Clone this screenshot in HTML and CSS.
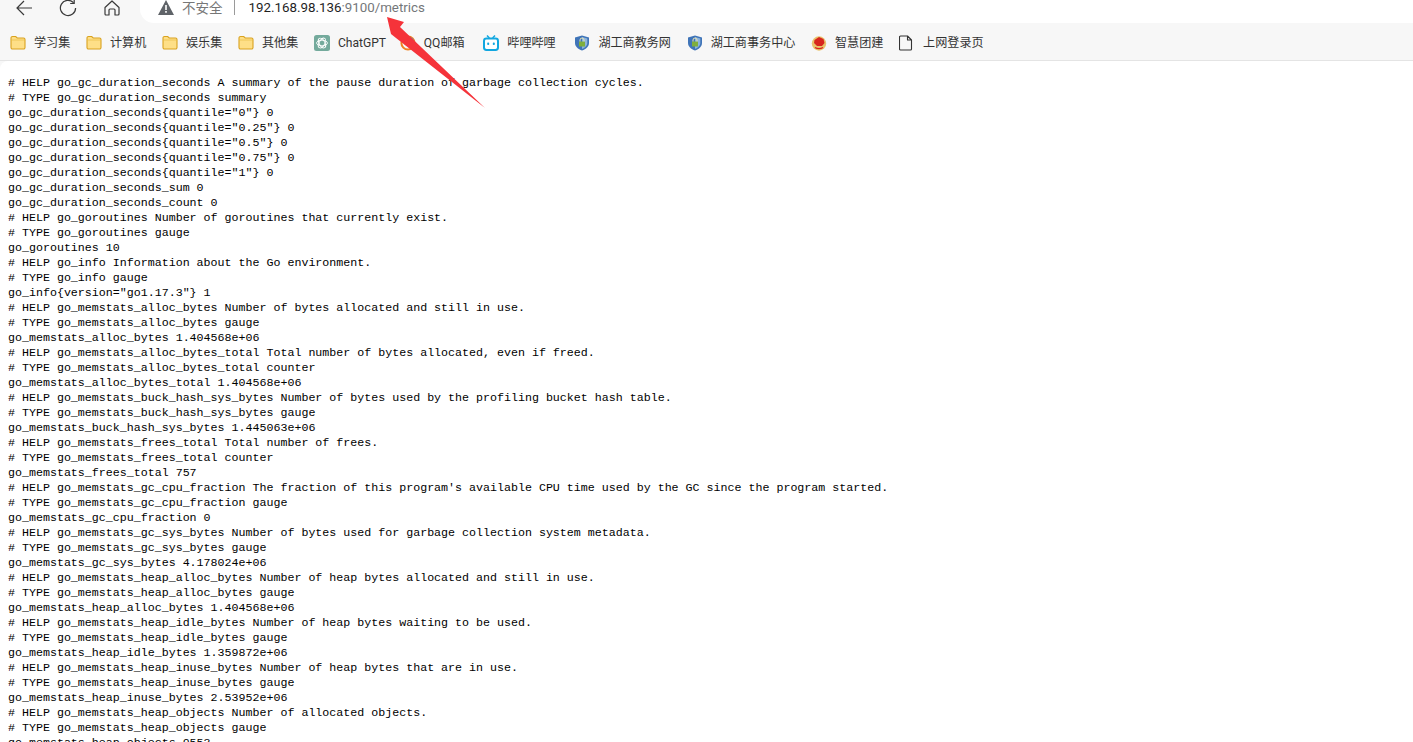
FILE: index.html
```html
<!DOCTYPE html>
<html lang="zh-CN">
<head>
<meta charset="utf-8">
<title>192.168.98.136:9100/metrics</title>
<link rel="stylesheet" href="styles.css">
</head>
<body>
<div class="toolbar">
  <div class="nav">
    <svg class="nav-icon" width="16" height="16" viewBox="0 0 16 16"><path d="M16 8H1M8 1 1 8l7 7" fill="none" stroke="#3a3a3a" stroke-width="1.2"/></svg>
    <svg class="nav-icon" width="18" height="18" viewBox="0 0 18 18"><path d="M14.4 3.6A7.6 7.6 0 1 0 16.6 9M15.2 0.5v4h-4" fill="none" stroke="#3a3a3a" stroke-width="1.2"/></svg>
    <svg class="nav-icon" width="16" height="16" viewBox="0 0 16 16"><path d="M1 7.500 8 1l7 6.500V14a1 1 0 0 1-1 1h-3v-5a1 1 0 0 0-1-1H6a1 1 0 0 0-1 1v5H2a1 1 0 0 1-1-1z" fill="none" stroke="#3a3a3a" stroke-width="1.2" stroke-linejoin="round"/></svg>
  </div>
  <div class="address">
    <svg class="warn" width="16" height="15" viewBox="0 0 16 15"><path d="M8 0 16 15H0z" fill="#5f6368"/><path d="M7.200 5h1.600v5H7.200zM7.200 11h1.600v1.700H7.200z" fill="#fff"/></svg>
    <span class="insecure">不安全</span>
    <span class="sep"></span>
    <span class="url"><span class="host">192.168.98.136</span>:9100/metrics</span>
  </div>
</div>
<div class="bookmarks">
  <a class="bm"><svg width="16" height="16" viewBox="0 0 16 16"><use href="#folder"/></svg>学习集</a>
  <a class="bm"><svg width="16" height="16" viewBox="0 0 16 16"><use href="#folder"/></svg>计算机</a>
  <a class="bm"><svg width="16" height="16" viewBox="0 0 16 16"><use href="#folder"/></svg>娱乐集</a>
  <a class="bm"><svg width="16" height="16" viewBox="0 0 16 16"><use href="#folder"/></svg>其他集</a>
  <a class="bm bm-chat"><svg width="16" height="16" viewBox="0 0 16 16"><rect width="16" height="16" rx="2.500" fill="#74aa9c"/><g fill="none" stroke="#fff" stroke-width=".9"><ellipse cx="8" cy="8" rx="5.400" ry="2.800"/><ellipse cx="8" cy="8" rx="5.400" ry="2.800" transform="rotate(60 8 8)"/><ellipse cx="8" cy="8" rx="5.400" ry="2.800" transform="rotate(120 8 8)"/></g></svg>ChatGPT</a>
  <a class="bm"><svg width="16" height="16" viewBox="0 0 16 16"><circle cx="8" cy="8" r="6.600" fill="none" stroke="#f0801f" stroke-width="2"/><path d="M8 1.500a6.500 6.500 0 0 1 6.500 6.500H8z" fill="#2f8fe0"/><circle cx="7" cy="7.500" r="3" fill="#ffc83d"/></svg>QQ邮箱</a>
  <a class="bm bm-bili"><svg width="16" height="16" viewBox="0 0 16 16"><path d="M4 0.500 6.400 3M12 0.500 9.600 3" stroke="#12a7e0" stroke-width="1.500" fill="none"/><rect x="1" y="3.600" width="14" height="11.400" rx="2.400" fill="#fff" stroke="#12a7e0" stroke-width="2"/><rect x="4.200" y="7.600" width="2" height="2.400" rx=".8" fill="#12a7e0"/><rect x="9.800" y="7.600" width="2" height="2.400" rx=".8" fill="#12a7e0"/></svg>哔哩哔哩</a>
  <a class="bm bm-shield"><svg width="16" height="16" viewBox="0 0 16 16"><use href="#shield"/></svg>湖工商教务网</a>
  <a class="bm"><svg width="16" height="16" viewBox="0 0 16 16"><use href="#shield"/></svg>湖工商事务中心</a>
  <a class="bm"><svg width="16" height="16" viewBox="0 0 16 16"><circle cx="8" cy="8.500" r="7.200" fill="#e9c36a"/><path d="M3.500 5 8 2l4.500 2 1 4-2.500 3H6L3 8z" fill="#d8261c"/><path d="M4 12.500c2.500 1.400 5.500 1.400 8 0" stroke="#d8261c" stroke-width="1.200" fill="none"/></svg>智慧团建</a>
  <a class="bm"><svg width="16" height="16" viewBox="0 0 16 16"><path d="M1.500 1h7l4 4v9a1 1 0 0 1-1 1h-10a1 1 0 0 1-1-1V2a1 1 0 0 1 1-1zM8.500 1v4h4" fill="none" stroke="#333" stroke-width="1.100" stroke-linejoin="round"/></svg>上网登录页</a>
</div>
<main class="page">
<pre class="metrics"># HELP go_gc_duration_seconds A summary of the pause duration of garbage collection cycles.
# TYPE go_gc_duration_seconds summary
go_gc_duration_seconds{quantile="0"} 0
go_gc_duration_seconds{quantile="0.25"} 0
go_gc_duration_seconds{quantile="0.5"} 0
go_gc_duration_seconds{quantile="0.75"} 0
go_gc_duration_seconds{quantile="1"} 0
go_gc_duration_seconds_sum 0
go_gc_duration_seconds_count 0
# HELP go_goroutines Number of goroutines that currently exist.
# TYPE go_goroutines gauge
go_goroutines 10
# HELP go_info Information about the Go environment.
# TYPE go_info gauge
go_info{version="go1.17.3"} 1
# HELP go_memstats_alloc_bytes Number of bytes allocated and still in use.
# TYPE go_memstats_alloc_bytes gauge
go_memstats_alloc_bytes 1.404568e+06
# HELP go_memstats_alloc_bytes_total Total number of bytes allocated, even if freed.
# TYPE go_memstats_alloc_bytes_total counter
go_memstats_alloc_bytes_total 1.404568e+06
# HELP go_memstats_buck_hash_sys_bytes Number of bytes used by the profiling bucket hash table.
# TYPE go_memstats_buck_hash_sys_bytes gauge
go_memstats_buck_hash_sys_bytes 1.445063e+06
# HELP go_memstats_frees_total Total number of frees.
# TYPE go_memstats_frees_total counter
go_memstats_frees_total 757
# HELP go_memstats_gc_cpu_fraction The fraction of this program's available CPU time used by the GC since the program started.
# TYPE go_memstats_gc_cpu_fraction gauge
go_memstats_gc_cpu_fraction 0
# HELP go_memstats_gc_sys_bytes Number of bytes used for garbage collection system metadata.
# TYPE go_memstats_gc_sys_bytes gauge
go_memstats_gc_sys_bytes 4.178024e+06
# HELP go_memstats_heap_alloc_bytes Number of heap bytes allocated and still in use.
# TYPE go_memstats_heap_alloc_bytes gauge
go_memstats_heap_alloc_bytes 1.404568e+06
# HELP go_memstats_heap_idle_bytes Number of heap bytes waiting to be used.
# TYPE go_memstats_heap_idle_bytes gauge
go_memstats_heap_idle_bytes 1.359872e+06
# HELP go_memstats_heap_inuse_bytes Number of heap bytes that are in use.
# TYPE go_memstats_heap_inuse_bytes gauge
go_memstats_heap_inuse_bytes 2.53952e+06
# HELP go_memstats_heap_objects Number of allocated objects.
# TYPE go_memstats_heap_objects gauge
go_memstats_heap_objects 9553</pre>
</main>
<svg class="annotation" width="1413" height="742" viewBox="0 0 1413 742"><polygon points="387,17 404,22 400,27 485,108 396,38 391,34" fill="#f5333a"/></svg>
<svg class="defs" width="0" height="0">
  <defs>
    <g id="folder"><path d="M1 3a1.500 1.500 0 0 1 1.500-1.500h3.200L7.200 3h6.300A1.500 1.500 0 0 1 15 4.500v8a1.500 1.500 0 0 1-1.500 1.500h-11A1.500 1.500 0 0 1 1 12.500z" fill="#fedf87" stroke="#d9a21f" stroke-width="1.100"/><path d="M1 5h14" stroke="#e8bb45" stroke-width=".7"/></g>
    <g id="shield"><path d="M8 0.500 15 2.500V8c0 3.500-3 6-7 7.500C4 14 1 11.500 1 8V2.500z" fill="#3f74b8"/><path d="M8 2 13.300 3.500V8c0 2.800-2.300 4.800-5.300 6z" fill="#8cb4dd"/><rect x="5" y="6.500" width="6" height="5" fill="#7fae3c"/><path d="M6 6.500V5a2 2 0 0 1 4 0v1.500" fill="none" stroke="#e8e2b0" stroke-width="1"/></g>
  </defs>
</svg>
</body>
</html>
```
FILE: styles.css
```css
* { box-sizing: border-box; }
html, body { margin: 0; height: 742px; overflow: hidden; background: #f7f7f7; }
body { position: relative; font-family: "Noto Sans", "Noto Sans CJK SC", sans-serif; color: #222; }

.toolbar { display: flex; height: 23px; }
.nav { display: flex; align-items: flex-start; gap: 27px; width: 140px; flex: none; padding-left: 16px; }
.nav-icon { flex: none; }
.nav-icon:nth-child(2) { margin-top: -1px; }
.address { flex: 1; display: flex; align-items: flex-start; background: #fff; border-bottom-left-radius: 14px; padding-left: 18px; }
.warn { flex: none; margin-right: 8px; }
.insecure { font-size: 13.500px; line-height: 16px; color: #777; }
.sep { width: 1px; height: 15px; background: #9a9a9a; margin: 0 13px 0 11px; }
.url { margin-left: 1px; font-family: Roboto, "Noto Sans", sans-serif; font-size: 13.340px; line-height: 16px; color: #74777a; }
.host { color: #1f1f1f; }

.bookmarks { display: flex; align-items: center; gap: 15.700px; height: 38px; padding: 3px 0 0 10px; border-bottom: 1px solid #e4e4e4; }
.bm { display: flex; align-items: center; gap: 8px; font-family: Roboto, "Noto Sans CJK SC", sans-serif; font-size: 12.100px; line-height: 16px; color: #333; white-space: nowrap; }
.bm svg { flex: none; }
.bm-chat { margin-right: -2px; }
.bm-bili { margin-left: 3px; }
.bm-shield { margin-left: 3px; }

.page { height: 681px; background: #fff; border-top-left-radius: 8px; overflow: hidden; padding: 14px 0 0 8px; }
.metrics { margin: 0; font-family: "Liberation Mono", monospace; font-size: 11.650px; line-height: 15px; color: #000; white-space: pre; }

.annotation { position: absolute; left: 0; top: 0; pointer-events: none; }
.defs { position: absolute; }
```
